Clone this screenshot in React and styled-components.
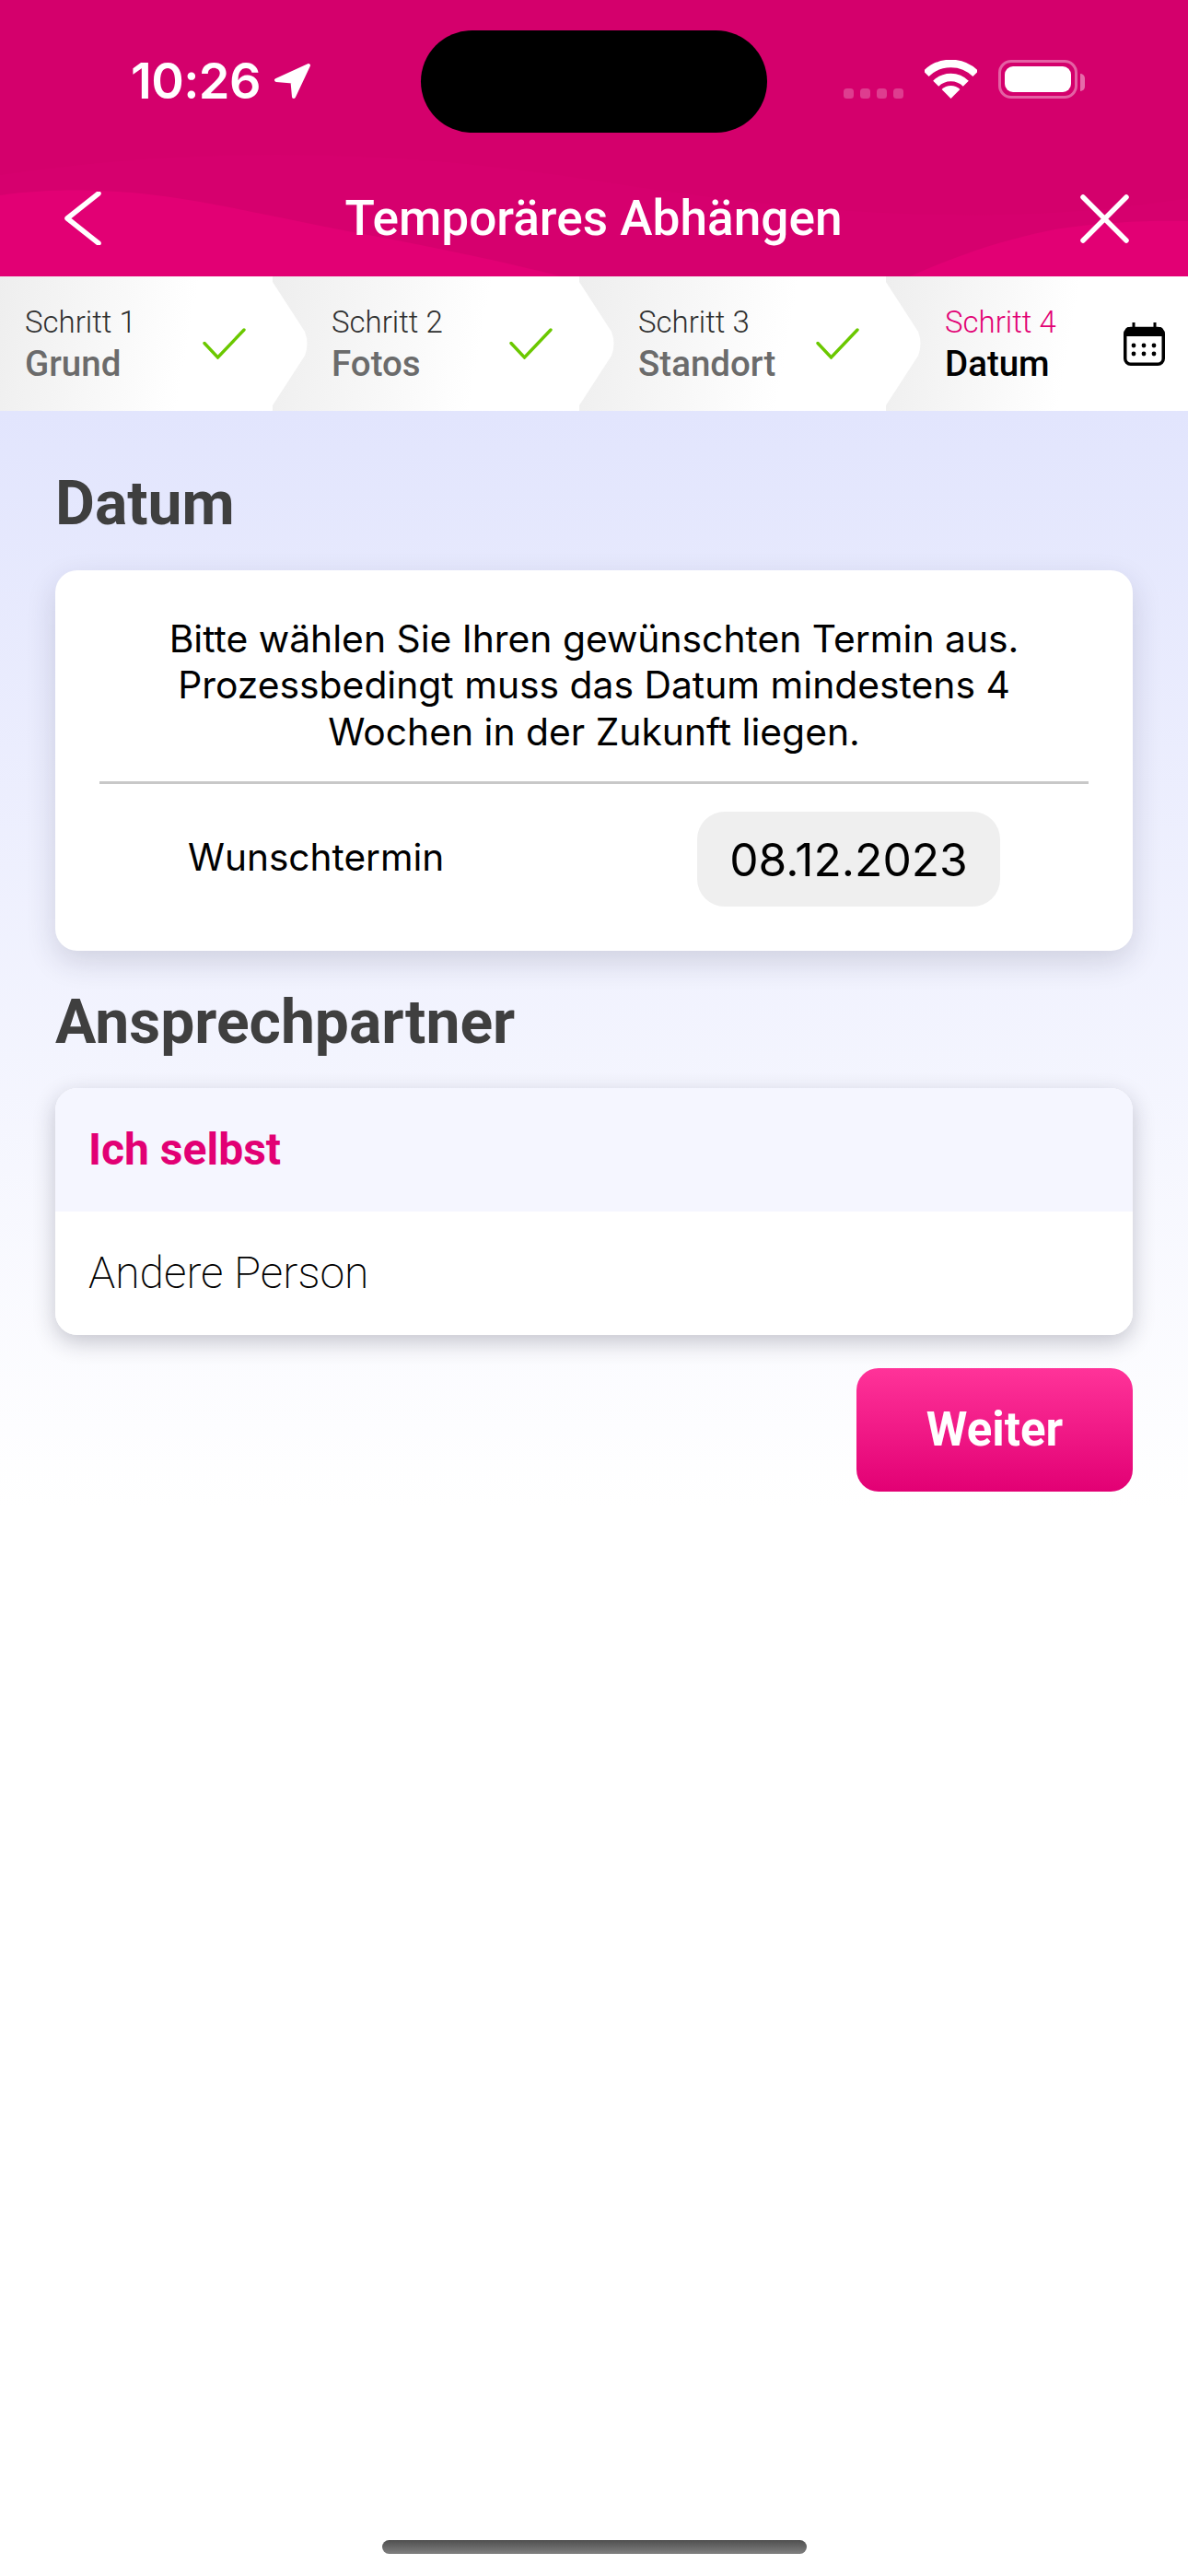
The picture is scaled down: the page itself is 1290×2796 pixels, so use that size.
import React from 'react';
import styled, { createGlobalStyle } from 'styled-components';

const Global = createGlobalStyle`
  html, body { margin: 0; padding: 0; background: #fff; }
  * { box-sizing: border-box; }
`;
const TELE = `Roboto, "Liberation Sans", sans-serif`;
const SF = `Inter, "Liberation Sans", sans-serif`;

const Page = styled.div`
  width: 1290px; height: 2796px; display: flex; flex-direction: column; overflow: hidden;
  background: #fff;
`;
const Header = styled.header`
  position: relative; height: 300px; background: #d4006c; color: #fff; flex: none;
  display: flex; flex-direction: column;
`;
const Waves = styled.svg`
  position: absolute; left: 0; top: 0; width: 1290px; height: 300px;
`;
const StatusBar = styled.div`
  position: relative; height: 195px; flex: none; display: flex; align-items: flex-start;
`;
const TimeGroup = styled.div`
  display: flex; align-items: center; gap: 14px; padding: 61px 0 0 142px; width: 457px; flex: none;
`;
const Time = styled.span`
  font: 600 54px/54px ${SF}; letter-spacing: -0.6px; color: #fff;
`;
const Island = styled.div`
  width: 376px; height: 111px; margin-top: 33px; background: #000; border-radius: 56px; flex: none;
`;
const StatusIcons = styled.div`
  display: flex; align-items: flex-end; padding: 65px 0 0 83px;
`;
const SignalDots = styled.div`
  display: flex; gap: 7px; margin-right: 23px;
`;
const SignalDot = styled.i`
  display: block; width: 11px; height: 11px; border-radius: 3.5px; background: rgba(255,255,255,.24);
`;
const Battery = styled.div`
  position: relative; width: 86px; height: 42px; margin-left: 23px; padding: 4px;
  border: 3px solid rgba(255,255,255,.38); border-radius: 14px;
`;
const BatteryFill = styled.div`
  width: 100%; height: 100%; background: #fff; border-radius: 9px;
`;
const BatteryNub = styled.div`
  position: absolute; left: 86px; top: 12px; width: 5px; height: 19px;
  background: rgba(255,255,255,.42); border-radius: 0 5px 5px 0;
`;
const NavBar = styled.nav`
  position: relative; flex: none; height: 84px; display: flex; align-items: center;
  justify-content: space-between; padding: 0 64px 0 70px;
`;
const NavTitle = styled.h1`
  margin: 0 0 0 6px; font: 500 53.2px/86px ${TELE}; color: #fff; letter-spacing: 0;
`;
const Steps = styled.div`
  height: 146px; flex: none; display: flex; background: #fff;
`;
const Step = styled.div`
  position: relative; z-index: ${p => p.$z};
  width: ${p => p.$w}px; height: 146px; flex: none;
  margin-left: ${p => (p.$first ? 0 : -40)}px;
  padding: 0 ${p => p.$pr}px 0 ${p => p.$pl}px;
  display: flex; align-items: center; justify-content: space-between;
  background: linear-gradient(100deg, #eeeeee 0%, #fff 60%);
  clip-path: ${p => p.$clip};
`;
const StepText = styled.div`
  display: flex; flex-direction: column; padding-top: 2px;
`;
const StepNo = styled.span`
  font: 300 33px/42px ${TELE}; color: ${p => (p.$active ? '#e20074' : '#2f2f2f')};
`;
const StepName = styled.span`
  font: 500 38.5px/48px ${TELE}; color: ${p => (p.$active ? '#000' : '#6b6b6b')};
`;
const Main = styled.main`
  flex: 1; display: flex; flex-direction: column; padding: 64px 60px 24px;
  background: linear-gradient(#e2e5fd 0, #fff 1190px);
`;
const SectionTitle = styled.h2`
  margin: ${p => p.$top}px 0 ${p => p.$bottom}px; height: 70px;
  font: 700 66px/73px ${TELE}; color: #3f3f3f;
`;
const Card = styled.section`
  background: #fff; border-radius: 24px; overflow: hidden;
  box-shadow: ${p => (p.$deep ? '0 8px 24px rgba(30,30,50,.24)' : '0 12px 32px rgba(40,40,70,.16)')};
`;
const InfoCard = styled(Card)`
  padding: 49px 48px 48px;
`;
const Info = styled.p`
  margin: 0; text-align: center; font: 400 40.8px/50.4px ${SF}; color: #000;
`;
const Divider = styled.hr`
  margin: 29px 0 30px; height: 3px; border: 0; background: #c8c8c8;
`;
const DateRow = styled.div`
  display: flex; align-items: center; justify-content: space-between; padding: 0 96px;
`;
const DateLabel = styled.span`
  font: 400 40.6px/50px ${SF}; color: #000; padding-bottom: 3px;
`;
const DatePill = styled.div`
  width: 329px; height: 103px; border-radius: 30px; background: #efefef;
  display: flex; align-items: center; justify-content: center;
  font: 400 49.7px/60px ${SF}; color: #000;
`;
const Option = styled.div`
  height: 134px; display: flex; align-items: center; padding: 0 36px;
  background: ${p => (p.$selected ? '#f5f6ff' : '#fff')};
  color: ${p => (p.$selected ? '#e20074' : '#000')};
  font: ${p => (p.$selected ? 700 : 200)} 48px/60px ${TELE};
`;
const Actions = styled.div`
  display: flex; justify-content: flex-end; margin-top: 36px;
`;
const NextButton = styled.button`
  width: 300px; height: 134px; border: 0; border-radius: 24px; color: #fff;
  background: linear-gradient(#ff3399, #e20074);
  font: 700 51px/60px ${TELE};
`;
const HomeBar = styled.div`
  width: 461px; height: 15px; margin: auto auto 0; border-radius: 8px;
  background: linear-gradient(#4f4f4f, #808080);
`;

const chevron = w => {
  const t = w - 1;
  return `path("M0 0 H${t - 50} Q${t - 43} 0 ${t - 39} 6 L${t - 4} 60 Q${t + 1} 73 ${t - 4} 86 L${t - 39} 140 Q${t - 43} 146 ${t - 50} 146 H0 Z")`;
};

const Check = () => (
  <svg width="47" height="34" viewBox="0 0 47 34" fill="none">
    <path d="M2 16.5 L16.5 32 L45 2" stroke="#6bc800" strokeWidth="3.4" strokeLinecap="round" strokeLinejoin="miter" />
  </svg>
);
const Calendar = () => (
  <svg width="45" height="47" viewBox="0 0 45 47" fill="none">
    <rect x="1.75" y="6.5" width="41.5" height="38.75" rx="6" stroke="#000" strokeWidth="3.5" />
    <path d="M2 15 V9 Q2 5 6 5 H39 Q43 5 43 9 V15 Z" fill="#000" />
    <path d="M11 0 V6 M34 0 V6" stroke="#000" strokeWidth="3" />
    {[25, 34].map(y => [11, 22, 33].map(x => <circle key={`${x}-${y}`} cx={x} cy={y} r="2.4" fill="#000" />))}
  </svg>
);
const LocationArrow = () => (
  <svg width="41" height="40" viewBox="0 0 41 40">
    <path d="M38 3 L3 19 L20.5 20.5 L22 37 Z" fill="#fff" stroke="#fff" strokeWidth="4" strokeLinejoin="round" />
  </svg>
);
const Wifi = () => (
  <svg width="57" height="42" viewBox="0 0 57 42" fill="none">
    <path d="M1.6 15.1 A38 38 0 0 1 55.4 15.1" stroke="#fff" strokeWidth="8.5" />
    <path d="M12.2 25.7 A23 23 0 0 1 44.8 25.7" stroke="#fff" strokeWidth="8.5" />
    <path d="M28.5 42 L18.6 32.1 A14 14 0 0 1 38.4 32.1 Z" fill="#fff" />
  </svg>
);
const Back = () => (
  <svg width="40" height="58" viewBox="0 0 40 58" fill="none">
    <path d="M37 2 L3 29 L37 56" stroke="#fff" strokeWidth="5.5" strokeLinecap="round" strokeLinejoin="round" />
  </svg>
);
const Close = () => (
  <svg width="53" height="53" viewBox="0 0 53 53" fill="none">
    <path d="M3 3 L50 50 M50 3 L3 50" stroke="#fff" strokeWidth="5.5" strokeLinecap="round" />
  </svg>
);

const steps = [
  { no: 'Schritt 1', name: 'Grund', w: 336, pl: 27, pr: 69, first: true },
  { no: 'Schritt 2', name: 'Fotos', w: 373, pl: 64, pr: 69 },
  { no: 'Schritt 3', name: 'Standort', w: 373, pl: 64, pr: 69 },
  { no: 'Schritt 4', name: 'Datum', w: 328, pl: 64, pr: 25, active: true },
];

export default function App() {
  return (
    <Page>
      <Global />
      <Header>
        <Waves viewBox="0 0 1290 300">
          <path d="M0 190 C200 160 420 160 640 195 C860 230 1080 250 1290 215 V300 H0 Z" fill="#d6006e" />
          <path d="M0 212 C40 206 80 206 110 207 C200 210 290 235 400 255 C480 270 550 285 609 300 H0 Z" fill="#e20074" />
          <path d="M988 300 C1050 272 1110 255 1152 248 C1200 241 1250 239 1290 240 V300 Z" fill="#e20074" />
        </Waves>
        <StatusBar>
          <TimeGroup>
            <Time>10:26</Time>
            <LocationArrow />
          </TimeGroup>
          <Island />
          <StatusIcons>
            <SignalDots>
              {[0, 1, 2, 3].map(i => <SignalDot key={i} />)}
            </SignalDots>
            <Wifi />
            <Battery>
              <BatteryFill />
              <BatteryNub />
            </Battery>
          </StatusIcons>
        </StatusBar>
        <NavBar>
          <Back />
          <NavTitle>Temporäres Abhängen</NavTitle>
          <Close />
        </NavBar>
      </Header>
      <Steps>
        {steps.map((s, i) => (
          <Step key={s.no} $z={4 - i} $w={s.w} $first={s.first} $pl={s.pl} $pr={s.pr}
            $clip={s.active ? 'none' : chevron(s.w)}>
            <StepText>
              <StepNo $active={s.active}>{s.no}</StepNo>
              <StepName $active={s.active}>{s.name}</StepName>
            </StepText>
            {s.active ? <Calendar /> : <Check />}
          </Step>
        ))}
      </Steps>
      <Main>
        <SectionTitle $top={0} $bottom={39}>Datum</SectionTitle>
        <InfoCard>
          <Info>
            Bitte wählen Sie Ihren gewünschten Termin aus.<br />
            Prozessbedingt muss das Datum mindestens 4<br />
            Wochen in der Zukunft liegen.
          </Info>
          <Divider />
          <DateRow>
            <DateLabel>Wunschtermin</DateLabel>
            <DatePill>08.12.2023</DatePill>
          </DateRow>
        </InfoCard>
        <SectionTitle $top={41} $bottom={38}>Ansprechpartner</SectionTitle>
        <Card $deep>
          <Option $selected>Ich selbst</Option>
          <Option>Andere Person</Option>
        </Card>
        <Actions>
          <NextButton>Weiter</NextButton>
        </Actions>
        <HomeBar />
      </Main>
    </Page>
  );
}
